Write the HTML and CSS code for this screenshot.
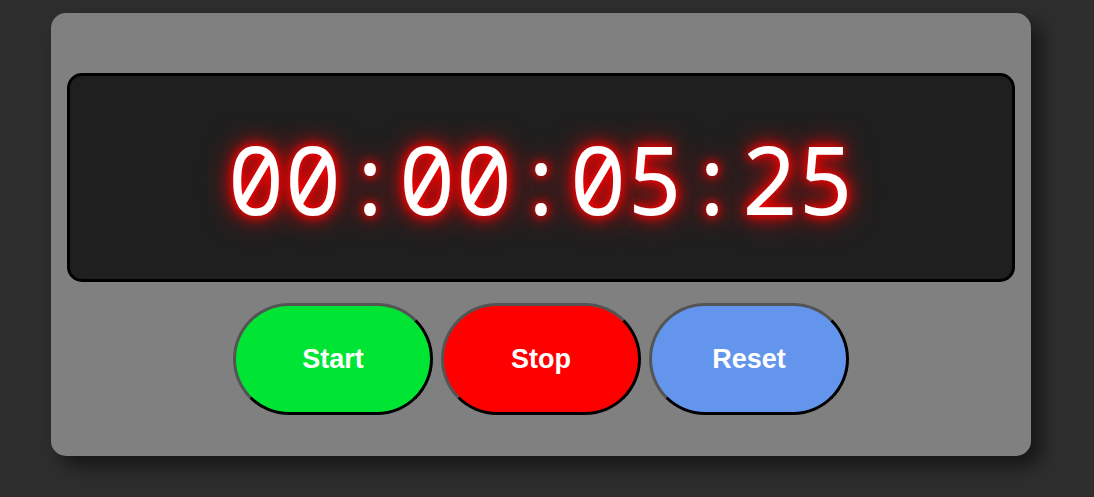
FILE: index.html
```html
<!DOCTYPE html>
<html lang="en">
<head>
<meta charset="utf-8">
<title>Stopwatch</title>
<link rel="stylesheet" href="styles.css">
</head>
<body>
<main class="watch">
  <div class="display">00:00:05:25</div>
  <div class="controls">
    <button class="btn btn-start">Start</button>
    <button class="btn btn-stop">Stop</button>
    <button class="btn btn-reset">Reset</button>
  </div>
</main>
</body>
</html>
```
FILE: styles.css
```css
html, body {
  margin: 0;
  padding: 0;
}
body {
  background: #2e2e2e;
  width: 1094px;
  height: 497px;
  padding: 13px 0 0 51px;
  box-sizing: border-box;
  font-family: "Liberation Sans", Arial, sans-serif;
}
.watch {
  width: 980px;
  height: 443px;
  box-sizing: border-box;
  background: #808080;
  border-radius: 15px;
  padding: 60px 16px 0 16px;
  box-shadow: 10px 10px 20px rgba(0, 0, 0, 0.55);
}
.display {
  height: 209px;
  box-sizing: border-box;
  background: #1f1f1f;
  border: 3px solid #000;
  border-radius: 15px;
  display: flex;
  align-items: center;
  justify-content: center;
  color: #fff;
  font-family: "Noto Sans Mono", "Droid Sans Mono", monospace;
  font-size: 95px;
  text-shadow: 0 0 8px #ff0000, 0 0 16px #ff0000, 0 0 30px #ff0000;
}
.controls {
  display: flex;
  justify-content: center;
  gap: 8px;
  margin-top: 21px;
}
.btn {
  width: 200px;
  height: 112px;
  border: 3px outset #000;
  border-radius: 56px;
  color: #fff;
  font-family: "Liberation Sans", Arial, sans-serif;
  font-weight: bold;
  font-size: 27px;
  padding: 0;
}
.btn-start { background: #00e533; }
.btn-stop { background: #ff0000; }
.btn-reset { background: #6495ed; }
```
